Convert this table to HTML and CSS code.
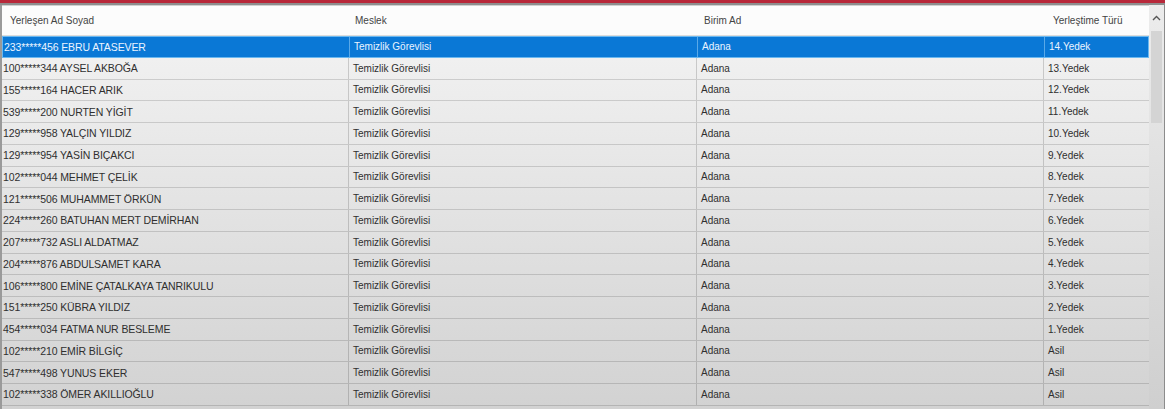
FILE: index.html
```html
<!DOCTYPE html>
<html lang="tr">
<head>
    <meta charset="UTF-8">
    <title>Yerleşen Listesi</title>
    <link rel="stylesheet" href="styles.css">
</head>
<body>
    <div class="topbar"></div>
    <div class="frame">
        <div class="grid">
            <div class="row head">
                <div class="cell c1">Yerleşen Ad Soyad</div>
                <div class="cell c2">Meslek</div>
                <div class="cell c3">Birim Ad</div>
                <div class="cell c4">Yerleştime Türü</div>
            </div>
            <div class="row selected">
                <div class="cell c1 name">233*****456 EBRU ATASEVER</div>
                <div class="cell c2">Temizlik Görevlisi</div>
                <div class="cell c3">Adana</div>
                <div class="cell c4">14.Yedek</div>
            </div>
            <div class="row">
                <div class="cell c1 name">100*****344 AYSEL AKBOĞA</div>
                <div class="cell c2">Temizlik Görevlisi</div>
                <div class="cell c3">Adana</div>
                <div class="cell c4">13.Yedek</div>
            </div>
            <div class="row">
                <div class="cell c1 name">155*****164 HACER ARIK</div>
                <div class="cell c2">Temizlik Görevlisi</div>
                <div class="cell c3">Adana</div>
                <div class="cell c4">12.Yedek</div>
            </div>
            <div class="row">
                <div class="cell c1 name">539*****200 NURTEN YİGİT</div>
                <div class="cell c2">Temizlik Görevlisi</div>
                <div class="cell c3">Adana</div>
                <div class="cell c4">11.Yedek</div>
            </div>
            <div class="row">
                <div class="cell c1 name">129*****958 YALÇIN YILDIZ</div>
                <div class="cell c2">Temizlik Görevlisi</div>
                <div class="cell c3">Adana</div>
                <div class="cell c4">10.Yedek</div>
            </div>
            <div class="row">
                <div class="cell c1 name">129*****954 YASİN BIÇAKCI</div>
                <div class="cell c2">Temizlik Görevlisi</div>
                <div class="cell c3">Adana</div>
                <div class="cell c4">9.Yedek</div>
            </div>
            <div class="row">
                <div class="cell c1 name">102*****044 MEHMET ÇELİK</div>
                <div class="cell c2">Temizlik Görevlisi</div>
                <div class="cell c3">Adana</div>
                <div class="cell c4">8.Yedek</div>
            </div>
            <div class="row">
                <div class="cell c1 name">121*****506 MUHAMMET ÖRKÜN</div>
                <div class="cell c2">Temizlik Görevlisi</div>
                <div class="cell c3">Adana</div>
                <div class="cell c4">7.Yedek</div>
            </div>
            <div class="row">
                <div class="cell c1 name">224*****260 BATUHAN MERT DEMİRHAN</div>
                <div class="cell c2">Temizlik Görevlisi</div>
                <div class="cell c3">Adana</div>
                <div class="cell c4">6.Yedek</div>
            </div>
            <div class="row">
                <div class="cell c1 name">207*****732 ASLI ALDATMAZ</div>
                <div class="cell c2">Temizlik Görevlisi</div>
                <div class="cell c3">Adana</div>
                <div class="cell c4">5.Yedek</div>
            </div>
            <div class="row">
                <div class="cell c1 name">204*****876 ABDULSAMET KARA</div>
                <div class="cell c2">Temizlik Görevlisi</div>
                <div class="cell c3">Adana</div>
                <div class="cell c4">4.Yedek</div>
            </div>
            <div class="row">
                <div class="cell c1 name">106*****800 EMİNE ÇATALKAYA TANRIKULU</div>
                <div class="cell c2">Temizlik Görevlisi</div>
                <div class="cell c3">Adana</div>
                <div class="cell c4">3.Yedek</div>
            </div>
            <div class="row">
                <div class="cell c1 name">151*****250 KÜBRA YILDIZ</div>
                <div class="cell c2">Temizlik Görevlisi</div>
                <div class="cell c3">Adana</div>
                <div class="cell c4">2.Yedek</div>
            </div>
            <div class="row">
                <div class="cell c1 name">454*****034 FATMA NUR BESLEME</div>
                <div class="cell c2">Temizlik Görevlisi</div>
                <div class="cell c3">Adana</div>
                <div class="cell c4">1.Yedek</div>
            </div>
            <div class="row">
                <div class="cell c1 name">102*****210 EMİR BİLGİÇ</div>
                <div class="cell c2">Temizlik Görevlisi</div>
                <div class="cell c3">Adana</div>
                <div class="cell c4">Asil</div>
            </div>
            <div class="row">
                <div class="cell c1 name">547*****498 YUNUS EKER</div>
                <div class="cell c2">Temizlik Görevlisi</div>
                <div class="cell c3">Adana</div>
                <div class="cell c4">Asil</div>
            </div>
            <div class="row">
                <div class="cell c1 name">102*****338 ÖMER AKILLIOĞLU</div>
                <div class="cell c2">Temizlik Görevlisi</div>
                <div class="cell c3">Adana</div>
                <div class="cell c4">Asil</div>
            </div>
        </div>
        <div class="scrollbar">
            <div class="arrow">
                <svg width="9" height="6" viewBox="0 0 9 6"><path d="M1 5 L4.5 1.5 L8 5" fill="none" stroke="#555" stroke-width="1.4"/></svg>
            </div>
            <div class="thumb"></div>
        </div>
    </div>
</body>
</html>
```

FILE: styles.css
```css
body {
    margin: 0;
    padding: 0;
    height: 409px;
    overflow: hidden;
    font-family: "Liberation Sans", Arial, sans-serif;
    color: #2f2f2f;
    background: linear-gradient(#f5f5f5, #d2d2d2);
}
.topbar {
    height: 3px;
    background-color: #b8283a;
    border-bottom: 2px solid #8e8e8e;
}
.frame {
    display: flex;
    height: 404px;
    border-left: 2px solid #9a9a9a;
}
.grid {
    flex: 1 1 auto;
    display: flex;
    flex-direction: column;
}
.row {
    display: grid;
    grid-template-columns: 346px 348px 347px 104px;
    height: 21.75px;
    border-bottom: 1px solid rgba(0, 0, 0, 0.14);
    box-sizing: border-box;
    font-size: 10px;
}
.row.head {
    height: 31px;
    background-color: #fcfcfc;
    border-top: 1px solid #d0d0d0;
    border-bottom: 1px solid #dcdcdc;
    font-size: 10px;
    color: #444;
}
.cell {
    display: flex;
    align-items: center;
    padding-left: 4px;
    border-left: 1px solid rgba(0, 0, 0, 0.16);
    white-space: nowrap;
    overflow: hidden;
}
.cell.c1 {
    border-left: none;
    padding-left: 1px;
}
.head .cell {
    border-left: none;
}
.head .c1 { padding-left: 8px; }
.head .c2 { padding-left: 7px; }
.head .c3 { padding-left: 8px; }
.head .c4 { padding-left: 10px; }
.name {
    font-size: 10.5px;
    letter-spacing: -0.1px;
}
.selected {
    background-color: #0a78d6;
    color: #eaf4ff;
    border: 1px solid #6ab8f0;
}
.selected .cell {
    border-left-color: #5aa9e8;
}
.scrollbar {
    width: 18px;
    flex: 0 0 auto;
    background: linear-gradient(#ececec, #cfcfcf);
    border-right: 3px solid #8c8c8c;
    box-sizing: border-box;
}
.arrow {
    height: 26px;
    display: flex;
    justify-content: center;
    align-items: center;
}
.thumb {
    width: 11px;
    height: 92px;
    margin-left: 2px;
    background-color: #d4d4d4;
}
```
